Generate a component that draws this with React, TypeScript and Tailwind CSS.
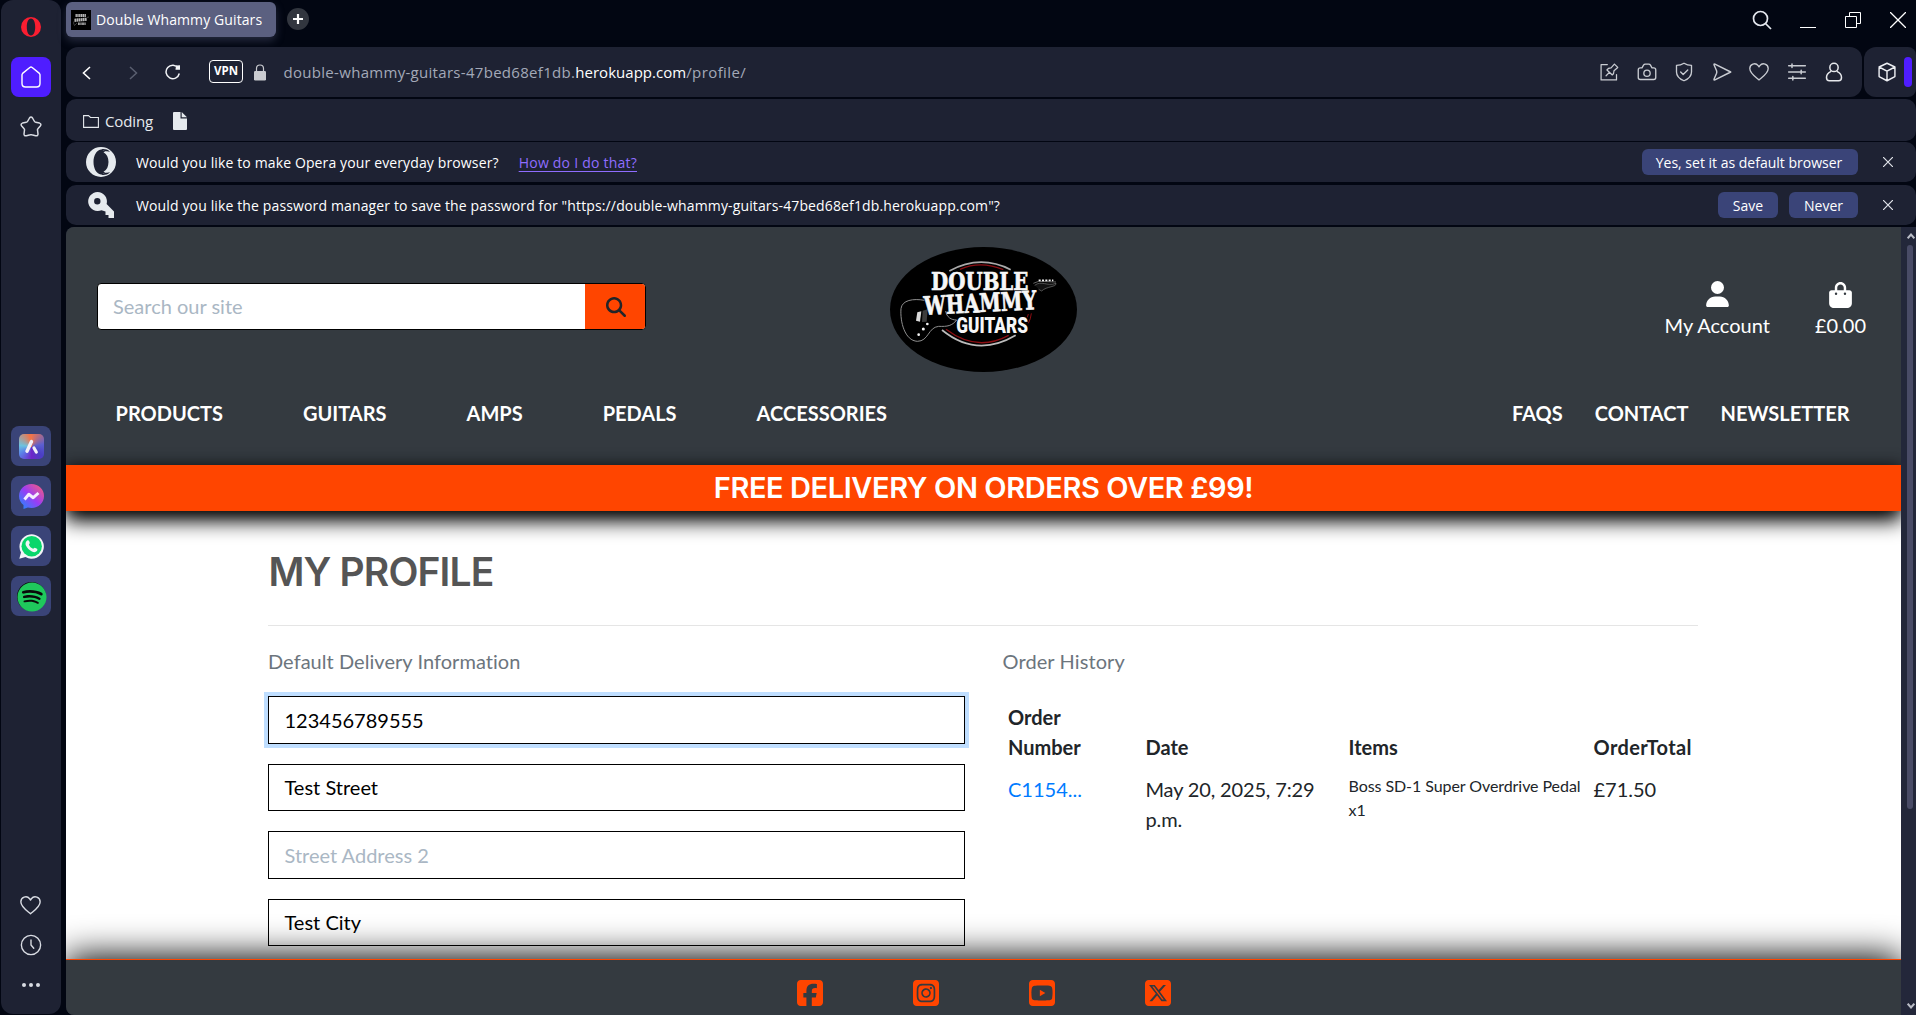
import React from "react";
import {
  FaMagnifyingGlass,
  FaSpotify,
  FaSquareFacebook,
  FaSquareInstagram,
  FaSquareXTwitter,
  FaSquareYoutube,
  FaUser,
} from "react-icons/fa6";

type Kids = { children: React.ReactNode };
type Cls = { className?: string };

function Line({ className = "", children, w = 1.5, box = 24 }: Cls & Kids & { w?: number; box?: number }) {
  return (
    <svg
      className={className}
      viewBox={`0 0 ${box} ${box}`}
      fill="none"
      stroke="currentColor"
      strokeWidth={w}
      strokeLinecap="round"
      strokeLinejoin="round"
    >
      {children}
    </svg>
  );
}

const HEART = "M12 21.500C8.500 18.300 1 13.500 1 8A5.600 5.600 0 0 1 11 4.300L12 5.800L13 4.300A5.600 5.600 0 0 1 23 8C23 13.500 15.500 18.300 12 21.500Z";

function GuitarMark() {
  return (
    <svg viewBox="90 51 561 375" className="h-[125px] w-[187px]">
      <ellipse cx="370.500" cy="238.500" rx="280.500" ry="187.500" fill="#000" />
      <path d="M268 123Q360 72 452 119" fill="none" stroke="#aaa" strokeWidth="5" />
      <path d="M300 118Q362 91 430 119" fill="none" stroke="#8c0d12" strokeWidth="4" />
      <path d="M246 300Q350 385 467 316" fill="none" stroke="#bbb" strokeWidth="5" />
      <path d="M258 298Q350 368 446 316" fill="none" stroke="#8c0d12" strokeWidth="4" />
      <path d="M514 250Q512 268 505 280M505 252L502 262" fill="none" stroke="#8c0d12" strokeWidth="3" />
      <path
        d="M193 211C160 205 126 210 123 236C120 275 134 332 172 334C206 334 204 292 236 289C262 290 276 288 290 270C274 270 260 262 257 243"
        fill="none"
        stroke="#8f8f8f"
        strokeWidth="3"
      />
      <path d="M172 247L184 244L180 275L168 272Z" fill="#d8d8d8" />
      <path d="M188 242L203 238L200 275L186 276Z" fill="#3c3c3c" />
      <g fill="#f5f5f5">
        <circle cx="176" cy="314" r="4" />
        <circle cx="190" cy="297" r="4.500" />
        <circle cx="202" cy="282" r="4" />
      </g>
      <path d="M524 166C545 150 560 170 588 160C590 172 560 168 545 183L536 178" fill="#111" stroke="#777" strokeWidth="2" />
      <path d="M520 160L536 154L588 156" stroke="#999" strokeWidth="2" fill="none" />
      <path d="M536 151h44" stroke="#f2f2f2" strokeWidth="5" strokeDasharray="6 4" />
      <g fill="#f7f7f7" stroke="#f7f7f7" strokeWidth="2" fontFamily="'DejaVu Serif', serif" fontWeight="700">
        <text x="213" y="180" fontSize="75" textLength="292" lengthAdjust="spacingAndGlyphs">DOUBLE</text>
        <text x="193" y="255" fontSize="77" textLength="338" lengthAdjust="spacingAndGlyphs" transform="rotate(-3 193 255)">
          WHAMMY
        </text>
      </g>
      <text x="289" y="309" fill="#f7f7f7" fontFamily="Roboto, sans-serif" fontWeight="900" fontSize="65" textLength="215" lengthAdjust="spacingAndGlyphs">
        GUITARS
      </text>
    </svg>
  );
}

function Favicon() {
  return (
    <svg viewBox="0 0 20 20" className="size-5" fill="none" stroke="#b5b5b5">
      <rect width="20" height="20" fill="#000" stroke="none" />
      <path d="M4.500 5.500H15" strokeWidth="3" strokeDasharray="1.400 .4" />
      <path d="M3.500 10.300L16 9.200" strokeWidth="3.200" strokeDasharray="1.700 .4" />
      <path d="M7 13.800H15" strokeWidth="2.400" strokeDasharray=".9 .4" />
      <path d="M3.500 10.500Q1.500 13 3.500 15.500L6 13M16 7.500L18 7" strokeWidth=".5" stroke="#777" />
    </svg>
  );
}

function Sidebar() {
  return (
    <aside className="ml-px flex h-[1014px] w-[60px] shrink-0 flex-col items-center rounded-xl bg-[#1e2233] text-[#d9dce3]">
      <svg viewBox="0 0 20 20" className="mt-[17px] size-5 shrink-0">
        <path fillRule="evenodd" fill="#fa1e31" d="M10 0a10 10 0 1 0 0 20a10 10 0 1 0 0-20ZM10 1.500c2.800 0 4.200 4 4.200 8.500s-1.400 8.500-4.200 8.500S5.800 14.500 5.800 10S7.200 1.500 10 1.500Z" />
      </svg>
      <div className="mt-5 grid size-10 shrink-0 place-items-center rounded-lg bg-[#4f1dff] text-white">
        <Line className="size-6" w={1.4}>
          <path d="M3 9.800Q3 9 3.600 8.400L10.800 2.500Q12 1.600 13.200 2.500L20.400 8.400Q21 9 21 9.800V18.500Q21 22 17.500 22H6.500Q3 22 3 18.500Z" />
        </Line>
      </div>
      <Line className="mt-[18px] mr-px size-6 shrink-0" w={1.5}>
        <path d="M10.500 3Q12 .8 13.500 3L15.500 6.500Q15.900 7.200 16.700 7.300L20.500 8.100Q22.800 9 21.300 11L18.900 13.800Q18.400 14.300 18.500 15L19 19Q18.900 21.400 16.600 20.700L12.700 19.800Q12 19.600 11.300 19.800L7.400 20.700Q5.100 21.400 5 19L5.500 15Q5.600 14.300 5.100 13.800L2.700 11Q1.200 9 3.500 8.100L7.300 7.300Q8.100 7.200 8.500 6.500Z" />
      </Line>
      <div className="mt-[287px] flex flex-col gap-2.5">
        <div className="grid size-10 place-items-center rounded-lg bg-[#3a4478]">
          <div className="grid size-[25px] place-items-center rounded-[5px] bg-[conic-gradient(from_0deg,#f0744a,#5c5fd0_80deg,#4a3fc4_130deg,#6f25c9_180deg,#5b7fe8_235deg,#6cc3e0_275deg,#f0744a_350deg)]">
            <svg viewBox="0 0 25 25" className="size-[25px]" stroke="#f3f0f8" strokeLinecap="round">
              <path d="M12.500 7.500L8 17.200" strokeWidth="3.400" />
              <path d="M15 14L17.300 18" strokeWidth="3.200" />
            </svg>
          </div>
        </div>
        <div className="grid size-10 place-items-center rounded-lg bg-[#3a4478]">
          <svg viewBox="0 0 25 25" className="size-[25px]">
            <defs>
              <linearGradient id="msg" x1="0" y1="1" x2="1" y2="0">
                <stop offset="0" stopColor="#1592ff" />
                <stop offset=".5" stopColor="#9a3cf5" />
                <stop offset="1" stopColor="#ff6070" />
              </linearGradient>
            </defs>
            <path d="M12.500 0C19.500 0 25 5.200 25 12s-5.500 12-12.500 12c-1.400 0-2.600-.2-3.700-.500L4.500 25V21C1.700 18.800 0 15.700 0 12C0 5.200 5.500 0 12.500 0Z" fill="url(#msg)" />
            <path d="M5.500 15.500L9.800 10.300L14.200 13.700L19.500 9" fill="none" stroke="#f3ecff" strokeWidth="3" strokeLinejoin="round" />
          </svg>
        </div>
        <div className="grid size-10 place-items-center rounded-lg bg-[#3a4478]">
          <svg viewBox="0 0 25 25" className="size-[25px]">
            <path d="M.3 24.700L2 18.500A12.200 12.200 0 1 1 6.500 23.100Z" fill="#f2f4f7" />
            <circle cx="12.700" cy="12.300" r="10.200" fill="#08d66b" />
            <path d="M8.200 6.500c.8-.5 1.600-.2 1.900.6l.7 1.700c.2.600-.900 1.500-.9 1.900c.8 1.900 2.200 3.200 4.200 4c.5.100 1.200-1.200 1.700-1l2.200 1c.6.300.5 1.700-.1 2.400c-1.300 1.300-3 1.300-5 .4c-2.700-1.200-4.800-3.300-6-5.900c-.8-1.900-.3-4.200 1.300-5.100Z" fill="#f2f4f7" />
          </svg>
        </div>
        <div className="grid size-10 place-items-center rounded-lg bg-[#3a4478]">
          <div className="grid size-[29px] place-items-center rounded-full bg-[#0a0a0a]">
            <FaSpotify className="size-[30px] text-[#1fc85c]" />
          </div>
        </div>
      </div>
      <div className="mt-auto mr-px mb-[18px] flex flex-col items-center gap-[18px]">
        <Line className="size-[21px]" w={1.6}><path d={HEART} /></Line>
        <Line className="size-[22px]" w={1.5}>
          <circle cx="12" cy="12" r="10.500" />
          <path d="M12 6.500V12L15 15.500" />
        </Line>
        <div className="flex h-[22px] items-center gap-[3px]">
          <i className="size-1 rounded-full bg-[#d9dce3]" />
          <i className="size-1 rounded-full bg-[#d9dce3]" />
          <i className="size-1 rounded-full bg-[#d9dce3]" />
        </div>
      </div>
    </aside>
  );
}

function TabStrip() {
  return (
    <div className="flex h-[47px] items-start pt-0.5">
      <div className="flex h-[35px] w-[210px] items-center gap-[5px] rounded-md bg-[#5b6080] pl-[5px] text-[14px] tracking-[0.1px] whitespace-nowrap text-white shadow-[0_4px_8px_rgba(91,96,128,0.4)]">
        <Favicon />
        <span>Double Whammy Guitars</span>
      </div>
      <div className="mt-1.5 ml-[11px] grid size-[22px] place-items-center rounded-full bg-[#32363f] text-white">
        <svg viewBox="0 0 10 10" className="size-2.5" stroke="currentColor" strokeWidth="2.200"><path d="M5 0V10M0 5H10" /></svg>
      </div>
      <div className="mt-2 mr-[10.500px] ml-auto flex items-center text-[#e4e7ee]">
        <svg viewBox="0 0 20 20" className="mr-7 size-5" fill="none" stroke="currentColor" strokeWidth="1.700">
          <circle cx="8.500" cy="8.500" r="7" /><path d="M13.500 13.500L19 19" />
        </svg>
        <i className="mt-[15px] mr-[29px] h-px w-4 bg-white" />
        <svg viewBox="0 0 16 16" className="mr-[29px] size-4" fill="none" stroke="#fff" strokeWidth="1">
          <path d="M.5 4.500H11.500V15.500H.5Z M4.500 4.500V.5H15.500V11.500H11.500" />
        </svg>
        <svg viewBox="0 0 16 16" className="size-4" stroke="#fff" strokeWidth="1.300"><path d="M0 0L16 16M16 0L0 16" /></svg>
      </div>
    </div>
  );
}

function AddressBar() {
  return (
    <div className="flex h-[50px] gap-0.5">
      <div className="flex w-[1796px] items-center rounded-xl bg-[#1e2233] pr-[18px] pl-4 text-[#dde0e6]">
        <svg viewBox="0 0 9 14" className="mt-0.5 h-[14px] w-[9px]" fill="none" stroke="#fff" strokeWidth="1.600"><path d="M8 1L1.500 7L8 13" /></svg>
        <svg viewBox="0 0 9 14" className="mt-0.5 ml-[38px] h-[14px] w-[9px]" fill="none" stroke="#5a5f70" strokeWidth="1.500"><path d="M1 1L7.500 7L1 13" /></svg>
        <svg viewBox="0 0 16 16" className="ml-[27px] size-4" fill="none" stroke="#f2f4f7" strokeWidth="1.500">
          <path d="M14.300 9.500A6.700 6.700 0 1 1 13.300 4.200" /><path d="M11 1.500L15 1.200V5.800H10.500Z" fill="#f2f4f7" stroke="none" />
        </svg>
        <div className="-mt-0.5 ml-[28px] grid h-[23px] w-[34px] place-items-center rounded border-[1.5px] border-white text-[11.5px] font-bold text-white">VPN</div>
        <svg viewBox="0 0 12 17" className="ml-[11px] h-[17px] w-3">
          <path d="M2.500 8V4.500a3.500 3.500 0 0 1 7 0V8" fill="none" stroke="#c9cbd0" strokeWidth="1.200" />
          <rect y="7" width="12" height="9.500" rx="1.200" fill="#c9cbd0" />
        </svg>
        <div className="ml-[17.500px] text-[15px] whitespace-nowrap text-[#a3a9b8]">
          <span className="tracking-[0.3px]">double-whammy-guitars-47bed68ef1db.</span>
          <span className="tracking-[0.03px] text-white">herokuapp.com</span>
          <span className="tracking-[0.4px]">/profile/</span>
        </div>
        <div className="ml-auto flex items-center gap-[17.500px] text-[#c9ccd2]">
          <Line className="size-5" w={1.5}>
            <path d="M10 3H2.500V21.500H21V15" />
            <path d="M14.500 7L18.500 2.500L22.500 6.500L18 10.500Q18 14 16 15.500L9.500 9.500Q11 7 14.500 7ZM12.500 12.500L8.500 16.500" />
          </Line>
          <Line className="size-5" w={1.6}>
            <path d="M1.500 9.500Q1.500 7 4 7H6L8 3.500Q8.500 2.500 10 2.500H14Q15.500 2.500 16 3.500L18 7H20Q22.500 7 22.500 9.500V18.500Q22.500 21 20 21H4Q1.500 21 1.500 18.500Z" /><circle cx="12" cy="13.500" r="3.800" />
          </Line>
          <Line className="size-5" w={1.6}>
            <path d="M12 1.500Q16 4 21 4V12C21 17 17 20.500 12 22.500C7 20.500 3 17 3 12V4Q8 4 12 1.500Z" /><path d="M8 12L11 15L16.500 9.500" />
          </Line>
          <Line className="size-5" w={1.7}><path d="M3.500 2.500Q2 2 2.500 3.500L5.500 10.500Q6 12 5.500 13.500L2.500 20.500Q2 22 3.500 21.500L22.500 12Z" /></Line>
          <Line className="size-5" w={1.6}><path d={HEART} /></Line>
          <Line className="size-5" w={1.8}><path d="M2 4.500H22M2 12H22M2 19.500H22M6 2.500V6.500M17 10V14M7 17.500V21.500" /></Line>
          <Line className="size-5 text-[#e6e8ec]" w={1.8}><circle cx="12" cy="6.500" r="5" /><path d="M8 11.500Q3 14 3 18.500Q3 22.500 6.500 22.500H17.500Q21 22.500 21 18.500Q21 14 16 11.500" /></Line>
        </div>
      </div>
      <div className="flex flex-1 items-center justify-between rounded-l-xl rounded-r-lg bg-[#1e2233] pr-1 pl-[13px] text-[#eef0f4]">
        <Line className="size-5" w={1.7}><path d="M12 1.500L21.500 6V17.500L12 22.500L2.500 17.500V6ZM2.500 6L12 11L21.500 6M12 11V22.500" /></Line>
        <i className="h-[30px] w-2 rounded bg-[#4f1dff]" />
      </div>
    </div>
  );
}

function CloseX() {
  return <svg viewBox="0 0 10 10" className="size-2.5" stroke="#e2e5eb" strokeWidth="1.200"><path d="M0 0L10 10M10 0L0 10" /></svg>;
}

function Bars() {
  const bar = "flex rounded-[10px] bg-[#1e2233] whitespace-nowrap";
  return (
    <>
      <div className={`${bar} mt-0.5 h-[42px] items-center pl-[17px] text-[15px] text-[#e6eaee]`}>
        <svg viewBox="0 0 16 13" className="mt-0.5 h-[13px] w-4" fill="none" stroke="currentColor" strokeWidth="1.100"><path d="M.6.600H5.500L7.500 2.500H15.400V12.400H.6Z" /></svg>
        <span className="mt-0.5 ml-1.5 tracking-[-0.13px]">Coding</span>
        <svg viewBox="0 0 14 18" className="mt-0.5 ml-5 h-[18px] w-[14px]" fill="#e6eaee"><path d="M1 0H7.500V6.500H14V17Q14 18 13 18H1Q0 18 0 17V1Q0 0 1 0ZM8.700 0L14 5.300H8.700Z" /></svg>
      </div>
      <div className={`${bar} mt-px h-10 items-center pr-[23px] pl-5 text-[14px] text-white`}>
        <svg viewBox="0 0 30 30" className="size-[30px]">
          <path fillRule="evenodd" fill="#e6eaee" d="M15 0a15 15 0 1 0 0 30a15 15 0 1 0 0-30ZM15 2.500c-5 1-7.500 6.500-7.500 12.500s2.500 11.500 7.500 12.500c4.500-.5 8-6 8-12.500S19.500 3 15 2.500Z" />
          <path fill="#1e2233" d="M15 2.300C21 .8 27 6 21.500 5.500Q18 3.500 15 2.300ZM15 27.700C21 29.200 27 24 21.500 24.500Q18 26.500 15 27.700Z" />
          <path fill="#e6eaee" d="M17.500 5.200Q23 2.600 27 8V22Q23 27.400 17.500 24.800Q22.500 22 22.500 15T17.500 5.200Z" />
        </svg>
        <span className="ml-5 tracking-[0.13px]">Would you like to make Opera your everyday browser?</span>
        <span className="ml-[20px] tracking-[0.23px] text-[#8f6dff] underline underline-offset-[3px]">How do I do that?</span>
        <span className="ml-auto grid h-[26px] w-[216px] place-items-center rounded-md bg-[#3a4478] pr-0.5">Yes, set it as default browser</span>
        <span className="ml-[25px]"><CloseX /></span>
      </div>
      <div className={`${bar} mt-[3px] h-10 items-center pr-[23px] pl-[22px] text-[14px] text-white`}>
        <svg viewBox="0 0 26 26" className="size-[26px]">
          <path fillRule="evenodd" fill="#e6eaee" d="M9.500 0A9.500 9.500 0 0 1 18.600 12L26 19.500V26H20.500V23H17.500V19.500L13.500 18.200A9.500 9.500 0 1 1 9.500 0ZM9.300 6a3.200 3.200 0 1 0 0 6.400a3.200 3.200 0 1 0 0-6.400Z" />
        </svg>
        <span className="ml-[22px] tracking-[0.132px]">
          Would you like the password manager to save the password for "https://double-whammy-guitars-47bed68ef1db.herokuapp.com"?
        </span>
        <span className="ml-auto grid h-[26px] w-[60px] place-items-center rounded-md bg-[#3a4478]">Save</span>
        <span className="ml-[11px] grid h-[26px] w-[69px] place-items-center rounded-md bg-[#3a4478]">Never</span>
        <span className="ml-[25px]"><CloseX /></span>
      </div>
    </>
  );
}

function SiteHeader() {
  return (
    <header className="h-[238px] bg-[#343a40] pt-5 text-white">
      <div className="grid h-[125px] grid-cols-3">
        <div className="mt-9 ml-[31px] flex h-[47px] w-[549px] overflow-hidden rounded border border-black bg-white">
          <div className="flex flex-1 items-center pb-0.5 pl-[15px] text-[#aab7c4]">Search our site</div>
          <div className="grid w-[60px] place-items-center bg-[#ff4500] pl-px text-[#212529]"><FaMagnifyingGlass className="size-5" /></div>
        </div>
        <div className="flex justify-center"><GuitarMark /></div>
        <div className="flex justify-end gap-[45px] pt-[34px] pr-[35px]">
          <div className="flex flex-col items-center">
            <FaUser className="h-[26px] w-[23px] shrink-0" />
            <span className="mt-[3px]">My Account</span>
          </div>
          <div className="flex flex-col items-center">
            <svg viewBox="0 0 448 512" className="mt-px h-[26px] w-[23px] shrink-0" fill="currentColor">
              <path d="M160 112c0-35.300 28.700-64 64-64s64 28.700 64 64l0 48-128 0 0-48zm-48 48l-64 0c-26.500 0-48 21.500-48 48L0 416c0 53 43 96 96 96l256 0c53 0 96-43 96-96l0-208c0-26.500-21.500-48-48-48l-64 0 0-48C336 50.100 285.900 0 224 0S112 50.100 112 112l0 48zm24 48a24 24 0 1 1 0 48 24 24 0 1 1 0-48zm152 24a24 24 0 1 1 48 0 24 24 0 1 1-48 0z" />
            </svg>
            <span className="mt-0.5">£0.00</span>
          </div>
        </div>
      </div>
      <nav className="flex justify-between pt-[26px] pr-[51.500px] pl-[49.500px] font-bold">
        <div className="flex gap-20">
          <span>PRODUCTS</span><span>GUITARS</span><span>AMPS</span><span>PEDALS</span><span>ACCESSORIES</span>
        </div>
        <div className="flex gap-8"><span>FAQS</span><span>CONTACT</span><span>NEWSLETTER</span></div>
      </nav>
    </header>
  );
}

const FIELDS = [
  { text: "123456789555", style: "text-black shadow-[0_0_0_4px_#bfdeff]" },
  { text: "Test Street", style: "text-black" },
  { text: "Street Address 2", style: "text-[#aab7c4]" },
  { text: "Test City", style: "text-black" },
];

function Profile() {
  return (
    <main className="h-[448px] bg-white">
      <div className="mx-auto h-full w-[1432px] pt-[37px]">
        <h2 className="h-12 pl-px font-[Inter,sans-serif] text-[39px] leading-[48px] font-semibold tracking-[-0.86px] text-[#555]">MY PROFILE</h2>
        <hr className="mt-[29px] mr-0.5 border-t border-[#e5e5e5]" />
        <div className="mt-5 flex gap-[37px]">
          <section className="w-[697px]">
            <p className="pl-[0.500px] tracking-[0.05px] text-[#6c757d]">Default Delivery Information</p>
            <div className="mt-5 flex flex-col gap-5">
              {FIELDS.map((f) => (
                <div key={f.text} className={`flex h-[47.500px] items-center border border-black bg-white pl-4 ${f.style}`}>{f.text}</div>
              ))}
            </div>
          </section>
          <section className="w-[698px] pl-px text-[#212529]">
            <p className="tracking-[0.1px] text-[#6c757d]">Order History</p>
            <div className="mt-[26px] grid grid-cols-[137.500px_203px_245px_1fr] gap-y-3 pl-[5.500px]">
              <b className="w-20">Order Number</b>
              <b className="self-end">Date</b>
              <b className="self-end">Items</b>
              <b className="self-end tracking-[0.4px]">OrderTotal</b>
              <span className="text-[#007bff]">C1154...</span>
              <span className="w-44 tracking-[-0.15px]">May 20, 2025, 7:29 p.m.</span>
              <span className="text-[16px] leading-6 tracking-[-0.07px]">Boss SD-1 Super Overdrive Pedal x1</span>
              <span>£71.50</span>
            </div>
          </section>
        </div>
      </div>
    </main>
  );
}

export default function App() {
  return (
    <div className="flex h-[1015px] w-[1916px] gap-[5px] overflow-hidden bg-[#020612] font-['Open_Sans','Noto_Sans',sans-serif]">
      <Sidebar />
      <div className="flex w-[1850px] flex-col">
        <TabStrip />
        <AddressBar />
        <Bars />
        <div className="mt-0.5 flex h-[788px] overflow-hidden rounded-l-lg bg-[#1e2233] font-[Lato,sans-serif] text-[20px] leading-[30px] [font-variant-ligatures:none]">
          <div className="h-full w-[1835px] overflow-hidden">
            <SiteHeader />
            <div className="relative h-[46px] bg-[#ff4500] text-center font-[Inter,sans-serif] text-[29px] leading-[46px] font-semibold tracking-[-0.42px] text-white shadow-[0_10px_20px_#000,0_0_15px_rgba(0,0,0,0.5)]">
              FREE DELIVERY ON ORDERS OVER £99!
            </div>
            <Profile />
            <footer className="relative flex h-14 justify-center gap-[90px] border-t border-[#ff4500] bg-[#343a40] pt-[18px] text-[#ff4500] shadow-[0_-3px_35px_#000]">
              <FaSquareFacebook className="h-[30px] w-[26px]" />
              <FaSquareInstagram className="h-[30px] w-[26px]" />
              <FaSquareYoutube className="h-[30px] w-[26px]" />
              <FaSquareXTwitter className="h-[30px] w-[26px]" />
            </footer>
          </div>
          <div className="flex w-[15px] flex-col items-center bg-[#23273a] text-[#b9bcc6]">
            <svg viewBox="0 0 8 6" className="mt-1.5 ml-1 h-1.5 w-2" fill="none" stroke="currentColor" strokeWidth="2"><path d="M.7 5.300L4 1.500L7.300 5.300" /></svg>
            <i className="mt-1.5 ml-[3px] h-[564px] w-1.5 rounded-full bg-[#494b66]" />
            <svg viewBox="0 0 8 6" className="mt-auto mb-1.5 ml-1 h-1.5 w-2" fill="none" stroke="currentColor" strokeWidth="2"><path d="M.7.700L4 4.500L7.300.7" /></svg>
          </div>
        </div>
      </div>
    </div>
  );
}
